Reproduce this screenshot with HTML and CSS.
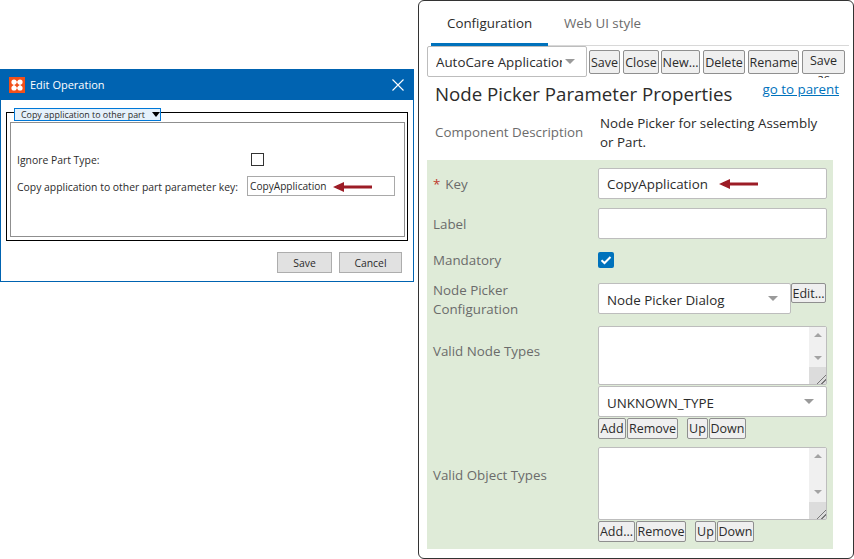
FILE: index.html
```html
<!DOCTYPE html>
<html lang="en">
<head>
  <meta charset="UTF-8">
  <meta name="viewport" content="width=device-width, initial-scale=1.0">
  <title>Edit Operation and Node Picker Parameter Properties</title>
  <link rel="stylesheet" href="styles.css">
</head>
<body>
  <section class="dialog">
    <header class="dialog-title">
      <svg class="logo" width="16" height="16" viewBox="0 0 16 16">
        <rect width="16" height="16" fill="#f2501a"/>
        <path d="M5 5h6M5 11h6M5 5v6M11 5v6" stroke="#fff" stroke-width="1.2" fill="none"/>
        <circle cx="5" cy="5" r="2.6" fill="#fff"/>
        <circle cx="11" cy="5" r="2.6" fill="#fff"/>
        <circle cx="5" cy="11" r="2.6" fill="#fff"/>
        <circle cx="11" cy="11" r="2.6" fill="#fff"/>
      </svg>
      <span class="dialog-name">Edit Operation</span>
      <svg class="dialog-close" width="12" height="12" viewBox="0 0 12 12">
        <path d="M.5.5l11 11M11.5.5l-11 11" stroke="#fff" stroke-width="1.1" fill="none"/>
      </svg>
    </header>
    <div class="group">
      <div class="legend-select">Copy application to other part<i class="legend-caret"></i></div>
      <div class="group-body">
        <div class="dialog-row">
          <span class="dialog-label">Ignore Part Type:</span>
          <span class="dialog-check"></span>
        </div>
        <div class="dialog-row key-row">
          <span class="dialog-label">Copy application to other part parameter key:</span>
          <span class="dialog-input">CopyApplication
            <svg class="arrow small" width="39" height="10" viewBox="0 0 39 10"><path d="M0 5l11-5v3.4h28v3.2H11V10z" fill="#9c1c26"/></svg>
          </span>
        </div>
      </div>
    </div>
    <footer class="dialog-actions">
      <button class="dialog-btn save-btn">Save</button>
      <button class="dialog-btn cancel-btn">Cancel</button>
    </footer>
  </section>

  <section class="panel">
    <nav class="tabs">
      <span class="tab active">Configuration</span>
      <span class="tab">Web UI style</span>
    </nav>
    <div class="toolbar">
      <div class="select app-select"><span class="select-text">AutoCare Application</span><i class="caret"></i></div>
      <button class="btn tool">Save</button>
      <button class="btn tool">Close</button>
      <button class="btn tool">New...</button>
      <button class="btn tool">Delete</button>
      <button class="btn tool">Rename</button>
      <button class="btn tool save-as">Save as</button>
    </div>
    <div class="heading">
      <h1>Node Picker Parameter Properties</h1>
      <a class="parent-link" href="#">go to parent</a>
    </div>
    <div class="description">
      <span class="field-label">Component Description</span>
      <p>Node Picker for selecting Assembly or Part.</p>
    </div>
    <form class="props">
      <label class="field-label"><span class="required">*</span>Key</label>
      <div class="input">CopyApplication
        <svg class="arrow" width="39" height="10" viewBox="0 0 39 10"><path d="M0 5l11-5v3.4h28v3.2H11V10z" fill="#9c1c26"/></svg>
      </div>

      <label class="field-label">Label</label>
      <div class="input"></div>

      <label class="field-label mandatory-label">Mandatory</label>
      <div class="check-cell">
        <svg width="16" height="16" viewBox="0 0 16 16">
          <rect width="16" height="16" rx="2" fill="#0072bc"/>
          <path d="M3.5 8.2l3 2.8 6-6" stroke="#fff" stroke-width="2" fill="none"/>
        </svg>
      </div>

      <label class="field-label picker-label">Node Picker Configuration</label>
      <div class="picker-cell">
        <div class="select picker-select"><span class="select-text">Node Picker Dialog</span><i class="caret"></i></div>
        <button type="button" class="btn edit-btn">Edit...</button>
      </div>

      <label class="field-label node-label">Valid Node Types</label>
      <div class="stack">
        <div class="listbox node-list">
          <div class="scrollbar"><i class="up"></i><i class="down"></i><i class="grip"></i></div>
        </div>
        <div class="select"><span class="select-text">UNKNOWN_TYPE</span><i class="caret"></i></div>
        <div class="list-actions">
          <button type="button" class="btn w-add">Add</button>
          <button type="button" class="btn w-remove-wide">Remove</button>
          <button type="button" class="btn w-up move-first">Up</button>
          <button type="button" class="btn w-down">Down</button>
        </div>
      </div>

      <label class="field-label object-label">Valid Object Types</label>
      <div class="stack">
        <div class="listbox object-list">
          <div class="scrollbar"><i class="up"></i><i class="down"></i><i class="grip"></i></div>
        </div>
        <div class="list-actions">
          <button type="button" class="btn w-add-more">Add...</button>
          <button type="button" class="btn w-remove">Remove</button>
          <button type="button" class="btn w-up move-first">Up</button>
          <button type="button" class="btn w-down">Down</button>
        </div>
      </div>
    </form>
  </section>
</body>
</html>
```

FILE: styles.css
```css
:root {
  --blue: #0063b1;
  --accent: #0072bc;
  --green: #dfebd8;
  --line: #bdbdbd;
  --text: #2b2b2b;
  --muted: #6b6b6b;
}
* {
  box-sizing: border-box;
}
body {
  margin: 0;
  width: 854px;
  height: 559px;
  position: relative;
  overflow: hidden;
  background: #fff;
  color: var(--text);
  font-family: "Open Sans", "Noto Sans", Arial, sans-serif;
}
button {
  font-family: inherit;
  margin: 0;
}

/* left window */
.dialog {
  position: absolute;
  left: 0;
  top: 69px;
  width: 414px;
  height: 213px;
  border: 1px solid var(--blue);
  border-top: 0;
  font-size: 10.4px;
}
.dialog-title {
  height: 31px;
  background: var(--blue);
  color: #fff;
  display: flex;
  align-items: center;
  padding: 0 9px 0 8px;
  font-size: 11px;
}
.dialog-name {
  margin-left: 5px;
}
.dialog-close {
  margin-left: auto;
}
.group {
  margin: 12px 5px 0 5px;
  width: 402px;
  height: 129px;
  padding: 0 2px 0 3px;
  border: 1px solid #000;
}
.legend-select {
  display: flex;
  align-items: center;
  width: 147px;
  height: 13px;
  margin: -5px 0 0 4px;
  padding: 0 0 0 6px;
  background: #e5f1fb;
  border: 1px solid #0078d7;
  font-size: 8.9px;
  white-space: nowrap;
  position: relative;
}
.legend-caret {
  margin-left: auto;
  width: 0;
  height: 0;
  border: 4px solid transparent;
  border-top: 5px solid #000;
  border-bottom: 0;
}
.group-body {
  height: 115px;
  margin-top: 1px;
  border: 1px solid #8f8f8f;
  padding-top: 29px;
  display: flex;
  flex-direction: column;
  gap: 10px;
}
.dialog-row {
  display: flex;
  align-items: center;
  height: 14px;
  padding-left: 6px;
}
.key-row {
  height: 20px;
}
.dialog-label {
  width: 230px;
  padding-top: 1px;
}
.dialog-check {
  margin-left: 4px;
  width: 13px;
  height: 13px;
  border: 1px solid #333;
}
.dialog-input {
  width: 148px;
  height: 20px;
  border: 1px solid #a9a9a9;
  padding-left: 2px;
  font-size: 10.15px;
  display: flex;
  align-items: center;
}
.arrow {
  margin-left: 11px;
  flex: none;
}
.arrow.small {
  margin-left: 6px;
  margin-top: 1px;
}
.dialog-actions {
  display: flex;
  justify-content: flex-end;
  gap: 7px;
  padding: 11px 11px 0 0;
}
.dialog-btn {
  height: 21px;
  background: #e1e1e1;
  border: 1px solid #adadad;
  font-size: 10.4px;
  color: var(--text);
  padding: 0;
}
.save-btn {
  width: 55px;
}
.cancel-btn {
  width: 63px;
}

/* right panel */
.panel {
  position: absolute;
  left: 418px;
  top: 0;
  width: 436px;
  height: 559px;
  border: 1px solid #333;
  border-radius: 6px;
  padding-left: 8px;
  font-size: 13.35px;
}
.tabs {
  display: flex;
  height: 45px;
  width: 418px;
  border-bottom: 1px solid #d8d8d8;
  margin-left: 4px;
}
.tab {
  padding: 13px 16px 0;
  color: var(--muted);
}
.tab.active {
  color: var(--text);
  width: 117px;
  border-bottom: 3px solid var(--accent);
  height: 45px;
}
.toolbar {
  display: flex;
  align-items: flex-start;
  height: 32px;
  overflow: hidden;
}
.toolbar .tool {
  margin-top: 4px;
  height: 24px;
  margin-left: 3px;
}
.select {
  display: flex;
  align-items: center;
  height: 31px;
  background: #fff;
  border: 1px solid var(--line);
  border-radius: 2px;
  padding: 0 12px 0 8px;
}
.select-text {
  flex: 1;
  min-width: 0;
  white-space: nowrap;
  overflow: hidden;
}
.props .select-text {
  padding-top: 2px;
}
.caret {
  flex: none;
  margin-left: 3px;
  width: 0;
  height: 0;
  border: 5px solid transparent;
  border-top: 5px solid #9a9a9a;
  border-bottom: 0;
}
.app-select {
  width: 160px;
  padding-right: 11px;
}
.btn {
  background: #efefef;
  border: 1px solid #8f8f8f;
  border-radius: 2px;
  color: var(--text);
  font-size: 12.5px;
  padding: 0;
  white-space: nowrap;
}
.toolbar .tool:nth-of-type(1) { width: 31px; margin-left: 2px; }
.toolbar .tool:nth-of-type(2) { width: 36px; }
.toolbar .tool:nth-of-type(3) { width: 39px; margin-left: 2px; }
.toolbar .tool:nth-of-type(4) { width: 42px; }
.toolbar .tool:nth-of-type(5) { width: 51px; }
.toolbar .save-as {
  width: 43px;
  white-space: normal;
  line-height: 18px;
  padding-top: 1px;
  overflow: visible;
}
.heading {
  display: flex;
  justify-content: space-between;
  align-items: flex-start;
  width: 406px;
  padding: 1px 0 0 8px;
  height: 31px;
}
.heading h1 {
  margin: 0;
  font-size: 18.7px;
  font-weight: 400;
  line-height: 30px;
}
.parent-link {
  color: var(--accent);
  margin-top: 1px;
  margin-right: -6px;
}
.description {
  display: flex;
  align-items: center;
  height: 47px;
  margin-bottom: 4px;
  padding-left: 8px;
}
.description .field-label {
  width: 165px;
}
.description p {
  margin: 0;
  width: 225px;
  line-height: 19px;
}
.field-label {
  color: var(--muted);
  line-height: 19px;
}
.required {
  color: #c0392b;
  margin-right: 5px;
}
.props {
  width: 406px;
  height: 389px;
  background: var(--green);
  padding: 8px 6px 0;
  display: grid;
  grid-template-columns: 165px 229px;
  grid-template-rows: 31px 31px 26px 34px 112px auto;
  row-gap: 9px;
  align-items: center;
}
.props .field-label {
  padding-top: 1px;
}
.props .mandatory-label {
  padding-top: 0;
  margin-top: -1px;
}
.props .picker-label {
  width: 110px;
  align-self: start;
  padding-top: 0;
  margin-top: -2px;
}
.props .node-label {
  align-self: start;
  margin-top: 15px;
}
.props .object-label {
  align-self: start;
  margin-top: 18px;
}
.input {
  height: 31px;
  background: #fff;
  border: 1px solid var(--line);
  border-radius: 2px;
  padding: 1px 0 0 8px;
  display: flex;
  align-items: center;
}
.check-cell {
  align-self: start;
  margin-top: 4px;
  height: 16px;
  line-height: 0;
}
.picker-cell {
  display: flex;
  align-items: flex-start;
  align-self: start;
  height: 31px;
}
.picker-select {
  width: 193px;
}
.edit-btn {
  width: 35px;
  height: 20px;
}
.stack {
  align-self: start;
  display: flex;
  flex-direction: column;
  gap: 1px;
}
.listbox {
  display: flex;
  justify-content: flex-end;
  background: #fff;
  border: 1px solid var(--line);
  border-radius: 2px;
}
.node-list {
  height: 59px;
}
.object-list {
  height: 73px;
}
.scrollbar {
  width: 17px;
  background: #f0f0f0;
  display: flex;
  flex-direction: column;
  align-items: center;
}
.up, .down {
  width: 0;
  height: 0;
  border: 4px solid transparent;
  margin-top: 6px;
}
.up {
  border-bottom: 4px solid #a3a3a3;
  border-top: 0;
}
.down {
  border-top: 4px solid #a3a3a3;
  border-bottom: 0;
  margin-top: 19px;
}
.object-list .down {
  margin-top: 32px;
}
.grip {
  margin-top: auto;
  width: 100%;
  height: 17px;
  background: linear-gradient(135deg, #dcdcdc 72%, #777 72%, #777 76%, #dcdcdc 76%, #dcdcdc 85%, #777 85%, #777 89%, #dcdcdc 89%);
}
.list-actions {
  display: flex;
  gap: 1px;
  height: 21px;
}
.list-actions .btn {
  height: 21px;
}
.w-add { width: 28px; }
.w-add-more { width: 37px; }
.w-remove { width: 50px; }
.w-remove-wide { width: 51px; }
.w-up { width: 21px; }
.w-down { width: 37px; }
.move-first {
  margin-left: 8px;
}
```
